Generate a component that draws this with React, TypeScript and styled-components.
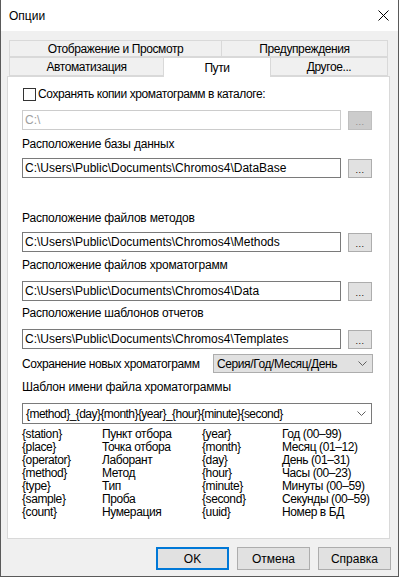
import React from 'react';
import styled, { createGlobalStyle } from 'styled-components';

const GlobalStyle = createGlobalStyle`
  html, body {
    margin: 0;
    padding: 0;
    background: #ffffff;
  }
  body {
    font-family: "Liberation Sans", Arial, sans-serif;
    font-size: 12px;
    letter-spacing: -0.4px;
    color: #000;
  }
`;

const Window = styled.div`
  width: 399px;
  height: 577px;
  box-sizing: border-box;
  border: 1px solid #5a5a5a;
  border-top: none;
  background: #f0f0f0;
  display: flex;
  flex-direction: column;
`;

const TitleBar = styled.div`
  height: 31px;
  flex-shrink: 0;
  background: #ffffff;
  display: flex;
  align-items: center;
  justify-content: space-between;
  padding: 0 9px 0 8px;
  letter-spacing: 0;
`;

const Body = styled.div`
  flex: 1;
  display: flex;
  flex-direction: column;
  padding: 9px 8px 0 6px;
`;

const TabStrip = styled.div`
  margin: 0 1px 0 2px;
  display: flex;
  flex-direction: column;
`;

const TabRow = styled.div<{ $height: number }>`
  display: flex;
  height: ${(p) => p.$height}px;
`;

const Tab = styled.div<{ $width: number; $active?: boolean }>`
  width: ${(p) => p.$width}px;
  box-sizing: border-box;
  border: 1px solid #d9d9d9;
  border-bottom: ${(p) => (p.$active ? 'none' : '1px solid #d9d9d9')};
  margin-left: -1px;
  background: ${(p) => (p.$active ? '#ffffff' : '#f0f0f0')};
  display: flex;
  align-items: center;
  justify-content: center;
  padding-top: ${(p) => (p.$active ? '0' : '1px')};
  height: ${(p) => (p.$active ? 'calc(100% + 1px)' : '100%')};
  position: relative;
  z-index: ${(p) => (p.$active ? 2 : 1)};
  &:first-child {
    margin-left: 0;
  }
`;

const Panel = styled.div`
  height: 463px;
  box-sizing: border-box;
  background: #ffffff;
  border: 1px solid #d9d9d9;
  padding: 0 16px 0 14px;
  display: flex;
  flex-direction: column;
`;

const CheckRow = styled.label`
  margin-top: 10px;
  margin-left: 1px;
  height: 14px;
  display: flex;
  align-items: center;
  gap: 2px;
`;

const CheckBox = styled.span`
  width: 13px;
  height: 13px;
  box-sizing: border-box;
  border: 1px solid #333333;
  background: #ffffff;
`;

const Label = styled.div<{ $mt: number }>`
  margin-top: ${(p) => p.$mt}px;
  height: 15px;
  line-height: 15px;
  white-space: nowrap;
  letter-spacing: -0.2px;
`;

const PathRow = styled.div<{ $mt: number }>`
  margin-top: ${(p) => p.$mt}px;
  display: flex;
  align-items: flex-start;
  gap: 7px;
`;

const PathInput = styled.div<{ $disabled?: boolean }>`
  width: 319px;
  height: 20px;
  box-sizing: border-box;
  border: 1px solid ${(p) => (p.$disabled ? '#cccccc' : '#7a7a7a')};
  color: ${(p) => (p.$disabled ? '#a0a0a0' : '#000')};
  background: #ffffff;
  padding-left: 2px;
  line-height: 18px;
  letter-spacing: 0;
  white-space: nowrap;
  overflow: hidden;
`;

const BrowseButton = styled.div<{ $disabled?: boolean }>`
  width: 24px;
  height: 19px;
  margin-top: 1px;
  box-sizing: border-box;
  border: 1px solid ${(p) => (p.$disabled ? '#bfbfbf' : '#adadad')};
  background: ${(p) => (p.$disabled ? '#cccccc' : '#e1e1e1')};
  color: ${(p) => (p.$disabled ? '#8a8a8a' : '#000')};
  font-size: 9px;
  line-height: 20px;
  text-align: center;
  letter-spacing: 0.5px;
`;

const SaveRow = styled.div`
  margin-top: 5px;
  display: flex;
  align-items: center;
  justify-content: space-between;
  white-space: nowrap;
`;

const Select = styled.div<{ $width: number; $flat?: boolean }>`
  width: ${(p) => p.$width}px;
  height: ${(p) => (p.$flat ? 19 : 21)}px;
  flex-shrink: 0;
  box-sizing: border-box;
  border: 1px solid ${(p) => (p.$flat ? '#adadad' : '#7a7a7a')};
  background: ${(p) => (p.$flat ? '#e1e1e1' : '#ffffff')};
  display: flex;
  align-items: center;
  justify-content: space-between;
  padding: 0 5px 0 3px;
  white-space: nowrap;
`;

const Combo = styled(Select)`
  margin-top: 8px;
  letter-spacing: -0.55px;
`;

const Chevron = () => (
  <svg width="9" height="5" viewBox="0 0 9 5">
    <path d="M0.5 0.5 L4.5 4.5 L8.5 0.5" fill="none" stroke="#606060" strokeWidth="1" />
  </svg>
);

const Legend = styled.div`
  margin-top: 4px;
  display: grid;
  grid-template-columns: 80px 100px 80px 1fr;
  line-height: 13px;
  white-space: nowrap;
`;

const ButtonBar = styled.div`
  margin-top: 8px;
  margin-right: -1px;
  display: flex;
  justify-content: flex-end;
  gap: 8px;
`;

const DialogButton = styled.div<{ $default?: boolean }>`
  width: 73px;
  height: 23px;
  box-sizing: border-box;
  border: ${(p) => (p.$default ? '2px solid #0078d7' : '1px solid #adadad')};
  background: #e1e1e1;
  display: flex;
  align-items: center;
  justify-content: center;
  letter-spacing: 0;
`;

const paths = [
  { label: 'Расположение базы данных', value: 'C:\\Users\\Public\\Documents\\Chromos4\\DataBase', lm: 7, im: 6 },
  { label: 'Расположение файлов методов', value: 'C:\\Users\\Public\\Documents\\Chromos4\\Methods', lm: 33, im: 6 },
  { label: 'Расположение файлов хроматограмм', value: 'C:\\Users\\Public\\Documents\\Chromos4\\Data', lm: 6, im: 8 },
  { label: 'Расположение шаблонов отчетов', value: 'C:\\Users\\Public\\Documents\\Chromos4\\Templates', lm: 5, im: 8 },
];

const legend = [
  ['{station}', 'Пункт отбора', '{year}', 'Год (00–99)'],
  ['{place}', 'Точка отбора', '{month}', 'Месяц (01–12)'],
  ['{operator}', 'Лаборант', '{day}', 'День (01–31)'],
  ['{method}', 'Метод', '{hour}', 'Часы (00–23)'],
  ['{type}', 'Тип', '{minute}', 'Минуты (00–59)'],
  ['{sample}', 'Проба', '{second}', 'Секунды (00–59)'],
  ['{count}', 'Нумерация', '{uuid}', 'Номер в БД'],
];

const App: React.FC = () => {
  return (
    <>
      <GlobalStyle />
      <Window>
        <TitleBar>
          <span>Опции</span>
          <svg width="11" height="11" viewBox="0 0 11 11">
            <path d="M0.5 0.5 L10.5 10.5 M10.5 0.5 L0.5 10.5" stroke="#000" strokeWidth="1" />
          </svg>
        </TitleBar>
        <Body>
          <TabStrip>
            <TabRow $height={17}>
              <Tab $width={213}>Отображение и Просмотр</Tab>
              <Tab $width={167}>Предупреждения</Tab>
            </TabRow>
            <TabRow $height={19}>
              <Tab $width={155}>Автоматизация</Tab>
              <Tab $width={108} $active>Пути</Tab>
              <Tab $width={118}>Другое...</Tab>
            </TabRow>
          </TabStrip>
          <Panel>
            <CheckRow>
              <CheckBox />
              <span>Сохранять копии хроматограмм в каталоге:</span>
            </CheckRow>
            <PathRow $mt={9}>
              <PathInput $disabled>C:\</PathInput>
              <BrowseButton $disabled>...</BrowseButton>
            </PathRow>
            {paths.map((p) => (
              <React.Fragment key={p.label}>
                <Label $mt={p.lm}>{p.label}</Label>
                <PathRow $mt={p.im}>
                  <PathInput>{p.value}</PathInput>
                  <BrowseButton>...</BrowseButton>
                </PathRow>
              </React.Fragment>
            ))}
            <SaveRow>
              <span>Сохранение новых хроматограмм</span>
              <Select $width={160} $flat>
                <span>Серия/Год/Месяц/День</span>
                <Chevron />
              </Select>
            </SaveRow>
            <Label $mt={7}>Шаблон имени файла хроматограммы</Label>
            <Combo $width={350}>
              <span>{'{method}_{day}{month}{year}_{hour}{minute}{second}'}</span>
              <Chevron />
            </Combo>
            <Legend>
              {legend.map((row) =>
                row.map((cell, i) => <span key={`${row[0]}-${i}`}>{cell}</span>)
              )}
            </Legend>
          </Panel>
          <ButtonBar>
            <DialogButton $default>OK</DialogButton>
            <DialogButton>Отмена</DialogButton>
            <DialogButton>Справка</DialogButton>
          </ButtonBar>
        </Body>
      </Window>
    </>
  );
};

export default App;
